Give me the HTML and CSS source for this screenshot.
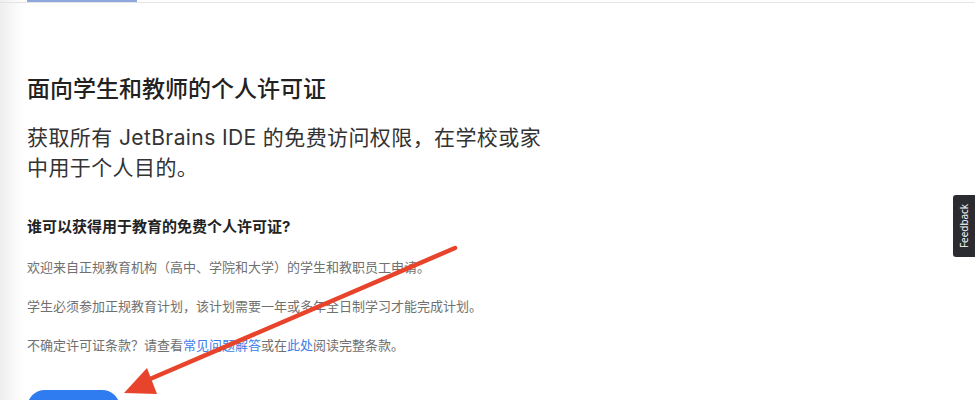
FILE: index.html
```html
<!DOCTYPE html>
<html lang="zh-CN">
<head>
    <meta charset="UTF-8">
    <meta name="viewport" content="width=device-width, initial-scale=1.0">
    <title>面向学生和教师的个人许可证</title>
    <link rel="stylesheet" href="styles.css">
</head>
<body>
    <div class="page">
        <div class="tabbar">
            <span class="tab-active"></span>
        </div>
        <div class="content">
            <h1 class="title">面向学生和教师的个人许可证</h1>
            <p class="lead">获取所有 JetBrains IDE 的免费访问权限，在学校或家中用于个人目的。</p>
            <h2 class="subtitle">谁可以获得用于教育的免费个人许可证?</h2>
            <p class="text">欢迎来自正规教育机构（高中、学院和大学）的学生和教职员工申请。</p>
            <p class="text">学生必须参加正规教育计划，该计划需要一年或多年全日制学习才能完成计划。</p>
            <p class="text">不确定许可证条款？请查看<a href="#">常见问题解答</a>或在<a href="#">此处</a>阅读完整条款。</p>
            <a class="btn" href="#">立即申请</a>
        </div>
    </div>

    <!-- annotation arrow drawn over the page -->
    <svg class="arrow" width="975" height="400" viewBox="0 0 975 400">
        <line x1="455" y1="248" x2="143" y2="382" stroke="#e8442b" stroke-width="4.5" stroke-linecap="round"/>
        <polygon points="124,393 147,368 157,394" fill="#e8442b"/>
    </svg>

    <div class="feedback"><span>Feedback</span></div>
</body>
</html>
```

FILE: styles.css
```css
*{
    margin: 0;
    padding: 0;
    box-sizing: border-box;
}
body{
    width: 975px;
    height: 400px;
    overflow: hidden;
    font-family: Inter, "Noto Sans CJK SC", sans-serif;
    background: linear-gradient(to right, #eeeeee 0, #fafafa 16px, #ffffff 26px);
}
.page{
    height: 400px;
}
.tabbar{
    height: 3px;
    border-bottom: 1px solid #e4e4e4;
    padding-left: 27px;
}
.tab-active{
    display: block;
    width: 110px;
    height: 2px;
    background-color: #8ea8de;
}
.content{
    padding: 71px 0 0 27px;
}
.title{
    font-size: 23px;
    line-height: 30px;
    font-weight: 500;
    color: #222;
}
.lead{
    max-width: 524px;
    margin-top: 19px;
    font-size: 21px;
    line-height: 30px;
    letter-spacing: 0.4px;
    color: #333;
}
.subtitle{
    margin-top: 33px;
    font-size: 15px;
    line-height: 22px;
    font-weight: 700;
    color: #222;
}
.text{
    margin-top: 19px;
    font-size: 13px;
    line-height: 20px;
    color: #707070;
}
.text a{
    color: #3a7de6;
    text-decoration: none;
}
.btn{
    display: block;
    width: 93px;
    height: 46px;
    margin-top: 35px;
    border-radius: 18px;
    background-color: #2f7cf0;
    color: #fff;
    font-size: 14px;
    line-height: 46px;
    text-align: center;
    text-decoration: none;
}
.arrow{
    position: absolute;
    left: 0;
    top: 0;
    pointer-events: none;
}
.feedback{
    position: absolute;
    right: 0;
    top: 195px;
    width: 22px;
    height: 62px;
    background-color: #2b2c31;
    border-radius: 3px 0 0 3px;
    display: flex;
    align-items: center;
    justify-content: center;
}
.feedback span{
    transform: rotate(-90deg);
    color: #fff;
    font-family: "Open Sans", sans-serif;
    font-size: 10px;
    white-space: nowrap;
}
```
